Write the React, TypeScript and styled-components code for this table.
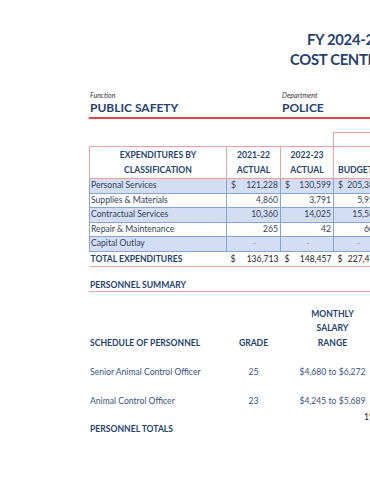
import React from "react";
import styled, { createGlobalStyle } from "styled-components";

const navy = "#26426f";
const ink = "#33415c";
const red = "#e2474d";
const pink = "#eea3a3";
const band = "#d3ddf4";
const blueLine = "#88a3dc";

type ExpRow = { label: string; y1: string; y2: string; b: string; dollar?: boolean };

const expRows: ExpRow[] = [
    { label: "Personal Services", y1: "121,228", y2: "130,599", b: "205,386", dollar: true },
    { label: "Supplies & Materials", y1: "4,860", y2: "3,791", b: "5,950" },
    { label: "Contractual Services", y1: "10,360", y2: "14,025", b: "15,580" },
    { label: "Repair & Maintenance", y1: "265", y2: "42", b: "600" },
    { label: "Capital Outlay", y1: "-", y2: "-", b: "-" },
];

const staff = [
    { title: "Senior Animal Control Officer", grade: "25", range: "$4,680 to $6,272" },
    { title: "Animal Control Officer", grade: "23", range: "$4,245 to $5,689" },
];

const Money = ({ value, dollar }: { value: string; dollar?: boolean }) => {
    if (value === "-") return <Dash>-</Dash>;
    return (
        <MoneyBox>
            <span>{dollar ? "$" : ""}</span>
            <span>{value}</span>
        </MoneyBox>
    );
};

const App = () => {
    return (
        <Page>
            <GlobalStyle />
            <TitleBlock>
                <TitleLine $indent={307}>FY 2024-25 ADOPTED BUDGET</TitleLine>
                <TitleLine $indent={290}>COST CENTER SUMMARY</TitleLine>
            </TitleBlock>

            <Sheet>
                <OrgRow>
                    <OrgField>
                        <OrgLabel>Function</OrgLabel>
                        <OrgValue>PUBLIC SAFETY</OrgValue>
                    </OrgField>
                    <OrgField>
                        <OrgLabel>Department</OrgLabel>
                        <OrgValue>POLICE</OrgValue>
                    </OrgField>
                </OrgRow>

                <ExpTable>
                    <colgroup>
                        <col style={{ width: 137 }} />
                        <col style={{ width: 54 }} />
                        <col style={{ width: 53 }} />
                        <col style={{ width: 48 }} />
                    </colgroup>
                    <thead>
                        <tr>
                            <GroupSpacer colSpan={3} />
                            <GroupCell>FY 2023-24</GroupCell>
                        </tr>
                        <tr>
                            <HeadCell>EXPENDITURES BY<br />CLASSIFICATION</HeadCell>
                            <HeadCell>2021-22<br />ACTUAL</HeadCell>
                            <HeadCell>2022-23<br />ACTUAL</HeadCell>
                            <HeadCell $indent><br />BUDGET</HeadCell>
                        </tr>
                    </thead>
                    <tbody>
                        {expRows.map((r, i) => (
                            <BodyRow key={r.label} $banded={i % 2 === 0}>
                                <LabelCell>{r.label}</LabelCell>
                                <NumCell><Money value={r.y1} dollar={r.dollar} /></NumCell>
                                <NumCell><Money value={r.y2} dollar={r.dollar} /></NumCell>
                                <NumCell><Money value={r.b} dollar={r.dollar} /></NumCell>
                            </BodyRow>
                        ))}
                        <TotalRow>
                            <TotalCell>TOTAL EXPENDITURES</TotalCell>
                            <TotalCell><Money value="136,713" dollar /></TotalCell>
                            <TotalCell><Money value="148,457" dollar /></TotalCell>
                            <TotalCell><Money value="227,466" dollar /></TotalCell>
                        </TotalRow>
                    </tbody>
                </ExpTable>

                <SectionHead>PERSONNEL SUMMARY</SectionHead>

                <StaffGrid>
                    <StaffHead $align="left">SCHEDULE OF PERSONNEL</StaffHead>
                    <StaffHead>GRADE</StaffHead>
                    <StaffHead>MONTHLY<br />SALARY<br />RANGE</StaffHead>
                    {staff.map((s) => (
                        <React.Fragment key={s.title}>
                            <StaffCell $align="left">{s.title}</StaffCell>
                            <StaffCell>{s.grade}</StaffCell>
                            <StaffCell>{s.range}</StaffCell>
                        </React.Fragment>
                    ))}
                </StaffGrid>
                <CountLine>19.00</CountLine>
                <SectionFoot>PERSONNEL TOTALS</SectionFoot>
            </Sheet>
        </Page>
    );
};

export default App;

const GlobalStyle = createGlobalStyle`
    html, body {
        margin: 0;
        padding: 0;
        background: #ffffff;
        overflow: hidden;
    }
    body {
        font-family: Lato, "Open Sans", "Liberation Sans", sans-serif;
    }
`;

const Page = styled.div`
    width: 370px;
    height: 480px;
    overflow: hidden;
    background: #ffffff;
`;

const TitleBlock = styled.header`
    padding-top: 29px;
    display: flex;
    flex-direction: column;
`;

const TitleLine = styled.div<{ $indent: number }>`
    padding-left: ${(p) => p.$indent}px;
    white-space: nowrap;
    font-size: 14.8px;
    letter-spacing: -0.3px;
    line-height: 20px;
    font-weight: 700;
    color: ${navy};
`;

const Sheet = styled.main`
    padding-left: 89px;
    width: 420px;
`;

const OrgRow = styled.section`
    margin-top: 22px;
    display: grid;
    grid-template-columns: 192px 1fr;
    border-bottom: 2px solid ${red};
    padding-left: 1px;
`;

const OrgField = styled.div`
    display: flex;
    flex-direction: column;
`;

const OrgLabel = styled.span`
    font-size: 7px;
    line-height: 9px;
    font-style: italic;
    color: #333333;
`;

const OrgValue = styled.span`
    font-size: 12px;
    line-height: 16px;
    font-weight: 700;
    color: ${navy};
    padding-bottom: 1px;
`;

const ExpTable = styled.table`
    margin-top: 13px;
    border-collapse: collapse;
    table-layout: fixed;
    width: 292px;
    font-size: 8.6px;
    color: ${ink};
`;

const GroupSpacer = styled.td`
    height: 13px;
    padding: 0;
`;

const GroupCell = styled.td`
    height: 13px;
    padding: 0;
    border-left: 1px solid ${pink};
    border-top: 1px solid ${pink};
    color: transparent;
    font-size: 1px;
`;

const HeadCell = styled.th<{ $indent?: boolean }>`
    height: 31px;
    padding: 0;
    padding-left: ${(p) => (p.$indent ? "4px" : "0")};
    border: 1px solid ${pink};
    font-weight: 700;
    font-size: 8.6px;
    line-height: 15px;
    color: ${navy};
    text-align: ${(p) => (p.$indent ? "left" : "center")};
    vertical-align: middle;
    white-space: nowrap;
`;

const BodyRow = styled.tr<{ $banded: boolean }>`
    background: ${(p) => (p.$banded ? band : "#ffffff")};
    height: 14.5px;

    & > td {
        border-top: 1px solid ${blueLine};
        border-bottom: 1px solid ${blueLine};
    }
`;

const LabelCell = styled.td`
    padding: 0 0 0 1px;
    line-height: 13px;
    border-left: 1px solid ${blueLine};
    border-right: 1px solid ${blueLine};
    white-space: nowrap;
`;

const NumCell = styled.td`
    padding: 0 2px 0 4px;
    line-height: 13px;
    border-left: 1px solid ${blueLine};
    border-right: 1px solid ${blueLine};
    white-space: nowrap;
`;

const MoneyBox = styled.div`
    display: flex;
    justify-content: space-between;
`;

const Dash = styled.div`
    text-align: center;
    color: #a0a8b8;
`;

const TotalRow = styled.tr`
    height: 15px;
    & > td {
        border-bottom: 1.5px solid ${pink};
    }
`;

const TotalCell = styled.td`
    padding: 1px 2px 0 4px;
    font-weight: 700;
    line-height: 13px;
    white-space: nowrap;
    color: #1d1d1d;

    &:first-child {
        padding-left: 1px;
        color: ${navy};
    }
    & ${MoneyBox} {
        font-weight: 400;
    }
`;

const SectionHead = styled.h2`
    margin: 12px 0 0;
    padding: 0 0 0 1px;
    width: 282px;
    font-size: 8.6px;
    line-height: 12px;
    font-weight: 700;
    color: ${navy};
    border-bottom: 1.5px solid ${pink};
`;

const StaffGrid = styled.section`
    margin-top: 15px;
    display: grid;
    grid-template-columns: 137px 54px 104px;
    align-items: end;
    row-gap: 15px;
`;

const StaffHead = styled.div<{ $align?: "left" | "center" }>`
    text-align: ${(p) => p.$align ?? "center"};
    padding-left: 1px;
    font-size: 8.6px;
    line-height: 14.5px;
    font-weight: 700;
    color: ${navy};
`;

const StaffCell = styled.div<{ $align?: "left" | "center" }>`
    text-align: ${(p) => p.$align ?? "center"};
    padding-left: 1px;
    font-size: 8.6px;
    line-height: 14px;
    color: #3a5283;
    white-space: nowrap;
`;

const CountLine = styled.div`
    padding-left: 275px;
    margin-top: 4px;
    font-size: 8.6px;
    line-height: 11px;
    color: #222222;
`;

const SectionFoot = styled.div`
    padding-left: 1px;
    font-size: 8.6px;
    line-height: 12px;
    font-weight: 700;
    color: ${navy};
`;
